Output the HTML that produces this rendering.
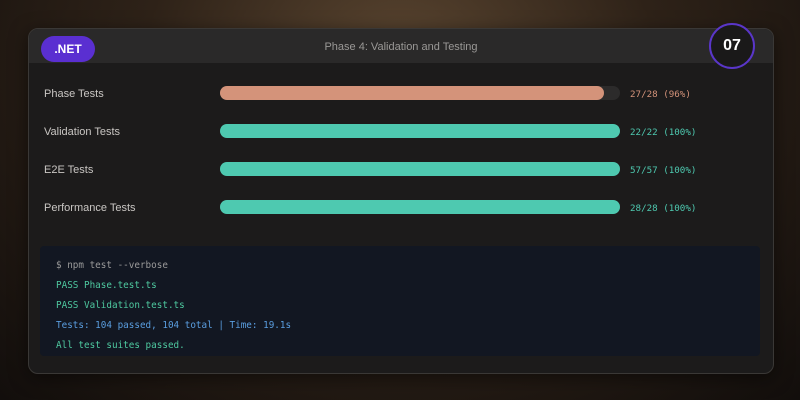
<!DOCTYPE html><html><head><style>
body{margin:0;width:800px;height:400px;overflow:hidden;background:radial-gradient(ellipse at 50% 15%,#5a4530 0%,#2e2218 45%,#120e0c 100%);font-family:"Liberation Sans",sans-serif;position:relative}
.card{position:absolute;left:28px;top:28px;width:744px;height:344px;border-radius:10px;background:#1c1b1b;border:1px solid #3a3836;overflow:hidden;box-shadow:0 4px 18px rgba(0,0,0,.5)}
.hdr{height:34px;background:#2a2929;position:relative}
.badge{position:absolute;left:12px;top:7px;width:54px;height:26px;border-radius:13px;background:#5a2fd1;color:#fff;font-size:12px;font-weight:bold;text-align:center;line-height:26px}
.title{position:absolute;left:0;right:0;top:12px;text-align:center;color:#9a9896;font-size:11px}
.num{position:absolute;left:709px;top:23px;width:42px;height:42px;border-radius:50%;border:2px solid #5a36c9;background:#1a1919;color:#fff;font-weight:bold;font-size:16px;text-align:center;line-height:42px}
.row{position:absolute;left:44px;color:#c9c6c3;font-size:11px}
.bar{position:absolute;left:220px;width:400px;height:14px;border-radius:7px;background:#2c2b2b}
.bar div{height:14px;border-radius:7px}
.pct{position:absolute;left:630px;font-family:"DejaVu Sans Mono",monospace;font-size:9.2px}
.term{position:absolute;left:40px;top:246px;width:720px;height:110px;background:#121722;border-radius:4px;font-family:"DejaVu Sans Mono",monospace;font-size:9.3px}
.term div{position:absolute;left:16px}
</style></head><body>
<div class="card"><div class="hdr"><div class="badge">.NET</div><div class="title">Phase 4: Validation and Testing</div></div></div>
<div class="num">07</div>
<div class="row" style="top:88px">Phase Tests</div><div class="bar" style="top:86px"><div style="width:384px;background:#d4937a"></div></div><div class="pct" style="top:89px;color:#d4937a">27/28 (96%)</div>
<div class="row" style="top:126px">Validation Tests</div><div class="bar" style="top:124px"><div style="width:400px;background:#4ec9b0"></div></div><div class="pct" style="top:127px;color:#4ec9b0">22/22 (100%)</div>
<div class="row" style="top:164px">E2E Tests</div><div class="bar" style="top:162px"><div style="width:400px;background:#4ec9b0"></div></div><div class="pct" style="top:165px;color:#4ec9b0">57/57 (100%)</div>
<div class="row" style="top:202px">Performance Tests</div><div class="bar" style="top:200px"><div style="width:400px;background:#4ec9b0"></div></div><div class="pct" style="top:203px;color:#4ec9b0">28/28 (100%)</div>
<div class="term">
<div style="top:14px;color:#9a9a9a">$ npm test --verbose</div>
<div style="top:34px;color:#4ec9a0">PASS Phase.test.ts</div>
<div style="top:54px;color:#4ec9a0">PASS Validation.test.ts</div>
<div style="top:74px;color:#5a9ee0">Tests: 104 passed, 104 total | Time: 19.1s</div>
<div style="top:94px;color:#4ec9a0">All test suites passed.</div>
</div>
</body></html>
